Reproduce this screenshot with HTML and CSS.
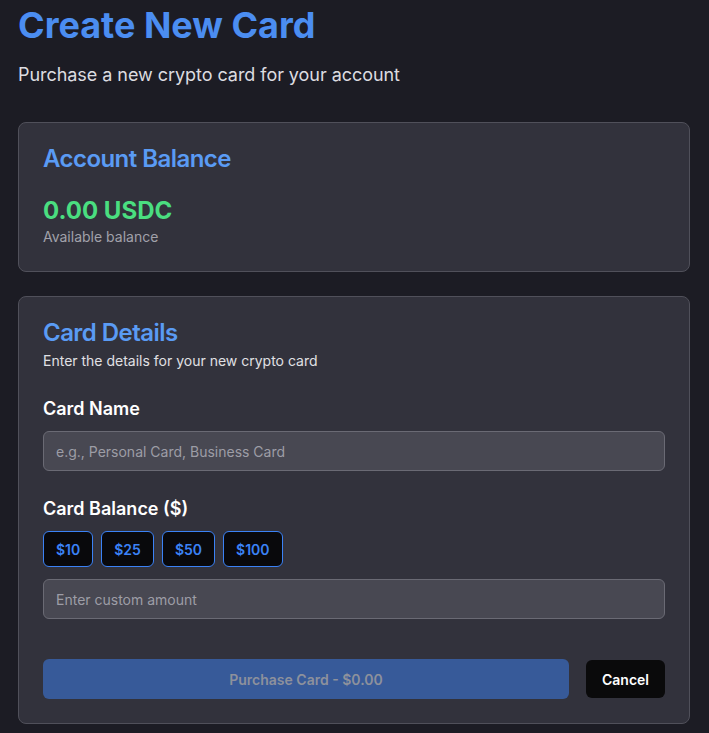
FILE: index.html
```html
<!DOCTYPE html>
<html lang="en">
<head>
<meta charset="utf-8">
<title>Create New Card</title>
<link rel="stylesheet" href="styles.css">
</head>
<body>
<main class="page">
  <h1 class="page-title">Create New Card</h1>
  <p class="page-subtitle">Purchase a new crypto card for your account</p>

  <section class="card balance-card">
    <h2 class="card-title">Account Balance</h2>
    <div class="balance-amount">0.00 USDC</div>
    <div class="balance-label">Available balance</div>
  </section>

  <section class="card details-card">
    <h2 class="card-title">Card Details</h2>
    <p class="card-desc">Enter the details for your new crypto card</p>

    <div class="field">
      <label class="field-label" for="cardName">Card Name</label>
      <input class="text-input" id="cardName" type="text" placeholder="e.g., Personal Card, Business Card">
    </div>

    <div class="field field-balance">
      <label class="field-label" for="amount">Card Balance ($)</label>
      <div class="preset-row">
        <button class="preset" type="button">$10</button>
        <button class="preset" type="button">$25</button>
        <button class="preset" type="button">$50</button>
        <button class="preset" type="button">$100</button>
      </div>
      <input class="text-input custom-input" id="amount" type="text" placeholder="Enter custom amount">
    </div>

    <div class="actions">
      <button class="btn-purchase" type="button" disabled>Purchase Card - $0.00</button>
      <button class="btn-cancel" type="button">Cancel</button>
    </div>
  </section>
</main>
</body>
</html>
```

FILE: styles.css
```css
* { box-sizing: border-box; }

html, body {
  margin: 0;
  padding: 0;
  background: #1c1c24;
}

body {
  font-family: "Inter", "Liberation Sans", sans-serif;
  color: #f4f4f5;
}

.page {
  padding: 5px 19px 10px 18px;
}

.page-title {
  margin: 0;
  font-size: 36px;
  line-height: 40px;
  font-weight: 700;
  color: #4b8df1;
}

.page-subtitle {
  margin: 16px 0 33px;
  font-size: 18px;
  line-height: 28px;
  letter-spacing: -0.05px;
  color: #dcdce0;
}

.card {
  background: #32323c;
  border: 1px solid #50505a;
  border-radius: 8px;
  padding: 24px;
}

.balance-card {
  margin-bottom: 24px;
}

.card-title {
  margin: 0;
  font-size: 24px;
  line-height: 24px;
  font-weight: 600;
  letter-spacing: -0.55px;
  color: #5a9bf4;
}

.balance-amount {
  margin-top: 24px;
  font-size: 24px;
  line-height: 32px;
  font-weight: 700;
  color: #4ade80;
}

.balance-label {
  font-size: 14px;
  line-height: 20px;
  color: #a1a1aa;
}

.card-desc {
  margin: 6px 0 24px;
  font-size: 14px;
  line-height: 20px;
  color: #e0e0e4;
}

.field {
  display: flex;
  flex-direction: column;
}

.field-balance {
  margin-top: 24px;
}

.field-label {
  font-size: 18px;
  line-height: 28px;
  font-weight: 600;
  color: #ffffff;
}

.text-input {
  margin-top: 8px;
  height: 40px;
  width: 100%;
  padding: 0 12px;
  background: #484852;
  border: 1px solid #6a6a74;
  border-radius: 6px;
  font-family: inherit;
  font-size: 14px;
  color: #f4f4f5;
  outline: none;
}

.text-input::placeholder {
  color: #9d9da6;
}

.preset-row {
  display: flex;
  gap: 8px;
  margin-top: 8px;
}

.preset {
  height: 36px;
  padding: 0 12px;
  background: #09090c;
  border: 1px solid #3b82f6;
  border-radius: 6px;
  font-family: inherit;
  font-size: 14px;
  font-weight: 600;
  color: #3b82f6;
}

.custom-input {
  margin-top: 12px;
}

.actions {
  display: flex;
  align-items: center;
  gap: 17px;
  margin-top: 40px;
}

.btn-purchase {
  flex: 1;
  height: 40px;
  background: #375a99;
  border: none;
  border-radius: 6px;
  font-family: inherit;
  font-size: 14px;
  font-weight: 600;
  color: #8d919c;
}

.btn-cancel {
  height: 38px;
  width: 79px;
  background: #0a0a0b;
  border: none;
  border-radius: 6px;
  font-family: inherit;
  font-size: 14px;
  font-weight: 600;
  color: #ffffff;
}
```
